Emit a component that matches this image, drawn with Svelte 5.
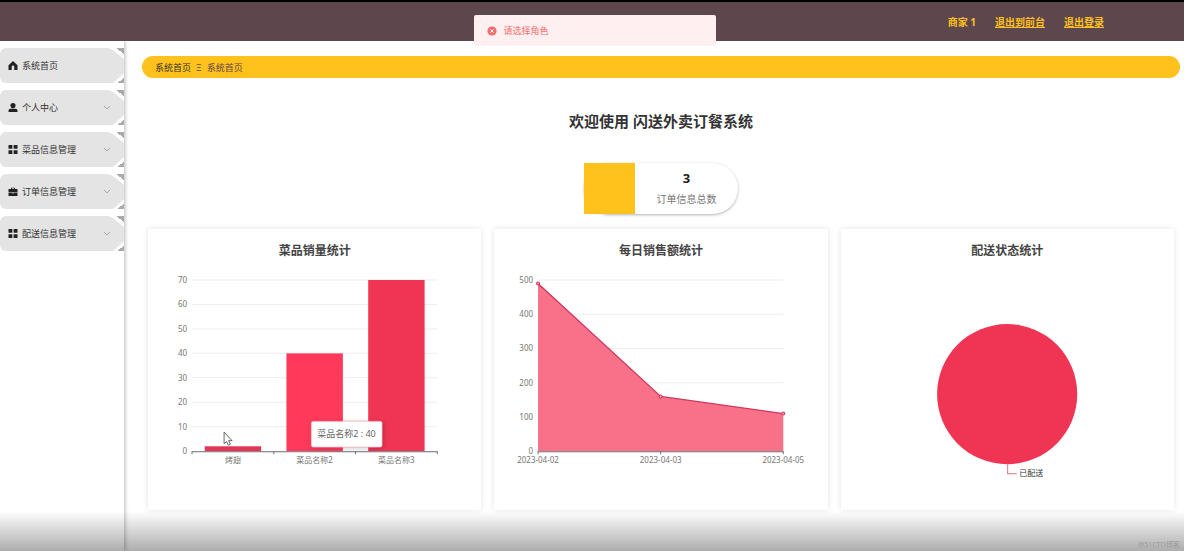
<script lang="ts">
	interface MenuItem {
		label: string;
		icon: 'home' | 'user' | 'grid' | 'case';
		children?: boolean;
	}

	const menu: MenuItem[] = [
		{ label: '系统首页', icon: 'home' },
		{ label: '个人中心', icon: 'user', children: true },
		{ label: '菜品信息管理', icon: 'grid', children: true },
		{ label: '订单信息管理', icon: 'case', children: true },
		{ label: '配送信息管理', icon: 'grid', children: true }
	];

	const icons = {
		home: 'M8 1 1 7.5V15h5v-5a2 2 0 0 1 4 0v5h5V7.5z',
		user: 'M8 1a4 4 0 1 1 0 8 4 4 0 0 1 0-8zM1 15v-2a3 3 0 0 1 3-3h8a3 3 0 0 1 3 3v2z',
		grid: 'M1 1h6v6H1zM9 1h6v6H9zM1 9h6v6H1zM9 9h6v6H9z',
		case: 'M5 4V2h6v2h4v5H1V4zm1.500 0h3V3h-3zM1 10h6v1h2v-1h6v5H1z'
	};

	const dishes = [
		{ name: '烤翅', value: 2, color: '#e43556' },
		{ name: '菜品名称2', value: 40, color: '#ff395a' },
		{ name: '菜品名称3', value: 70, color: '#ef3553' }
	];

	const sales = [
		{ date: '2023-04-02', value: 490 },
		{ date: '2023-04-03', value: 160 },
		{ date: '2023-04-05', value: 110 }
	];

	// plot area shared by both axis charts
	const left = 44;
	const right = 289;
	const top = 21;
	const base = 192;

	const dishTicks = [0, 10, 20, 30, 40, 50, 60, 70];
	const salesTicks = [0, 100, 200, 300, 400, 500];
	const band = (right - left) / dishes.length;
	const barWidth = band * 0.69;

	function scale(value: number, max: number) {
		return base - (value / max) * (base - top);
	}

	const points = sales.map((s, i) => ({
		...s,
		x: left + (i * (right - left)) / (sales.length - 1),
		y: scale(s.value, 500)
	}));
	const line = points.map((p) => `${p.x},${p.y}`).join(' ');
</script>

<div class="app">
	<header class="topbar">
		<span>商家 1</span>
		<a href="#front">退出到前台</a>
		<a href="#logout">退出登录</a>
	</header>

	<div class="body">
		<nav class="sidebar">
			<ul>
				{#each menu as item}
					<li>
						<button class="menu-btn">
							<svg class="menu-icon" viewBox="1 1 14 14" aria-hidden="true">
								<path d={icons[item.icon]} fill-rule="evenodd" />
							</svg>
							<span>{item.label}</span>
							{#if item.children}
								<svg class="arrow" viewBox="0 0 8 8" aria-hidden="true">
									<path d="M1 2l3 3 3-3" />
								</svg>
							{/if}
						</button>
					</li>
				{/each}
			</ul>
		</nav>

		<main>
			<div class="breadcrumb">
				<a href="#home">系统首页</a>
				<span class="sep">Ξ</span>
				<span>系统首页</span>
			</div>

			<h1>欢迎使用 闪送外卖订餐系统</h1>

			<div class="stat">
				<div class="stat-icon"></div>
				<div class="stat-text">
					<strong>3</strong>
					<span>订单信息总数</span>
				</div>
			</div>

			<div class="cards">
				<section class="card">
					<h2>菜品销量统计</h2>
					<svg class="chart" viewBox="0 0 333 251">
						{#each dishTicks as tick}
							<line class="grid" x1={left} x2={right} y1={scale(tick, 70)} y2={scale(tick, 70)} />
							<text class="y-label" x={left - 5} y={scale(tick, 70) + 3}>{tick}</text>
						{/each}
						{#each dishes as dish, i}
							<rect
								x={left + band * i + (band - barWidth) / 2}
								y={scale(dish.value, 70)}
								width={barWidth}
								height={base - scale(dish.value, 70)}
								fill={dish.color}
							/>
							<text class="x-label" x={left + band * (i + 0.5)} y={base + 12}>{dish.name}</text>
						{/each}
						<line class="axis" x1={left} x2={right} y1={base + 0.5} y2={base + 0.5} />
						{#each [0, 1, 2, 3] as i}
							<line class="axis" x1={left + band * i} x2={left + band * i} y1={base} y2={base + 3} />
						{/each}
						<g class="tooltip">
							<rect x="163" y="162" width="71" height="26" rx="2" />
							<text x="169" y="178">菜品名称2 : 40</text>
						</g>
						<path class="pointer" d="M76 173v11.500l2.500-2 1.800 3.500 2-1-1.800-3.500h3.500z" />
					</svg>
				</section>

				<section class="card">
					<h2>每日销售额统计</h2>
					<svg class="chart" viewBox="0 0 333 251">
						{#each salesTicks as tick}
							<line class="grid" x1={left} x2={right} y1={scale(tick, 500)} y2={scale(tick, 500)} />
							<text class="y-label" x={left - 5} y={scale(tick, 500) + 3}>{tick}</text>
						{/each}
						<polygon class="area" points="{left},{base} {line} {right},{base}" />
						<line class="axis" x1={left} x2={right} y1={base + 0.5} y2={base + 0.5} />
						<polyline class="trend" points={line} />
						{#each points as p}
							<line class="axis" x1={p.x} x2={p.x} y1={base} y2={base + 3} />
							<circle class="dot" cx={p.x} cy={p.y} r="1.500" />
							<text class="x-label" x={p.x} y={base + 12}>{p.date}</text>
						{/each}
					</svg>
				</section>

				<section class="card">
					<h2>配送状态统计</h2>
					<svg class="chart" viewBox="0 0 333 251">
						<circle cx="166" cy="135" r="70" fill="#ef3553" />
						<path class="leader" d="M166.500 205v9.500h9" />
						<text class="pie-label" x="178" y="217">已配送</text>
					</svg>
				</section>
			</div>
		</main>
	</div>

	<div class="message" role="alert">
		<svg viewBox="0 0 10 10" aria-hidden="true">
			<circle cx="5" cy="5" r="4.600" />
			<path d="M3.300 3.300l3.400 3.400M6.700 3.300L3.300 6.700" />
		</svg>
		<span>请选择角色</span>
	</div>

	<div class="fade"><span>@51CTO博客</span></div>
</div>

<style>
	:global(body) {
		background: #fff;
		font-family: 'Noto Sans', 'Noto Sans CJK SC', sans-serif;
		color: #333;
	}

	.app {
		display: flex;
		flex-direction: column;
		min-height: 100vh;
	}

	.topbar {
		display: flex;
		align-items: center;
		justify-content: flex-end;
		gap: 19px;
		box-sizing: border-box;
		height: 41px;
		padding-right: 80px;
		border-top: 2px solid #000;
		background: #5d474c;
		color: #ffc11c;
		font-size: 10px;
		font-weight: 700;
	}

	.topbar a {
		color: inherit;
	}

	.body {
		display: flex;
		flex: 1;
	}

	.sidebar {
		flex: 0 0 124px;
		box-shadow: 1px 0 4px rgba(0, 0, 0, 0.28);
		clip-path: inset(0 -8px 0 0);
	}

	.sidebar ul {
		display: flex;
		flex-direction: column;
		gap: 7px;
		margin: 0;
		padding: 7px 0;
		list-style: none;
	}

	/* grey folded corners behind the cut button */
	.sidebar li {
		background:
			linear-gradient(to top right, transparent 50%, #aaa 50%) top right / 8px 6px no-repeat,
			linear-gradient(to bottom right, transparent 50%, #aaa 50%) bottom right / 7px 5px no-repeat;
	}

	.menu-btn {
		display: flex;
		align-items: center;
		gap: 4px;
		width: 100%;
		height: 35px;
		padding: 0 13px 0 8px;
		border: 0;
		border-radius: 6px 0 0 6px;
		background: #e4e4e4;
		clip-path: polygon(0 0, 108px 0, 113px 2px, 100% 11px, 100% 25px, 113px 100%, 0 100%);
		color: #333;
		font: inherit;
		font-size: 9px;
		cursor: pointer;
	}

	.menu-icon {
		width: 10px;
		height: 9px;
		fill: #222;
	}

	.arrow {
		width: 8px;
		height: 8px;
		margin-left: auto;
		fill: none;
		stroke: #999;
		stroke-width: 0.8;
	}

	main {
		display: flex;
		flex: 1;
		flex-direction: column;
		align-items: center;
		min-width: 0;
		padding: 15px 4px 40px 18px;
	}

	.breadcrumb {
		display: flex;
		align-items: center;
		align-self: stretch;
		gap: 5px;
		height: 22px;
		padding: 0 13px;
		border-radius: 11px;
		background: #ffc11c;
		color: #5d474c;
		font-size: 9px;
	}

	.breadcrumb a {
		color: #333;
		text-decoration: none;
	}

	h1 {
		margin: 33px 0 32px;
		font-size: 15px;
		line-height: 20px;
	}

	.stat {
		display: flex;
		height: 51px;
		margin-bottom: 15px;
		border-radius: 26px;
		box-shadow: 0 1px 3px rgba(0, 0, 0, 0.3);
	}

	.stat-icon {
		width: 51px;
		background: #ffc11c;
	}

	.stat-text {
		display: flex;
		flex-direction: column;
		align-items: center;
		gap: 5px;
		width: 103px;
		padding-top: 7px;
		color: #777;
		font-size: 10px;
		line-height: 16px;
	}

	.stat-text strong {
		color: #222;
		font-size: 13px;
	}

	.cards {
		display: grid;
		grid-template-columns: repeat(3, 1fr);
		align-self: stretch;
		gap: 13px;
		margin: 0 6px;
	}

	.card {
		padding-top: 14px;
		background: #fff;
		box-shadow: 0 0 6px rgba(0, 0, 0, 0.11);
	}

	h2 {
		margin: 0;
		color: #444;
		font-size: 12px;
		line-height: 16px;
		text-align: center;
	}

	.chart {
		display: block;
		width: 100%;
		font-size: 8px;
		fill: #777;
	}

	.grid {
		stroke: #ebedf0;
	}

	.axis {
		stroke: #6e7079;
	}

	.y-label {
		text-anchor: end;
	}

	.x-label {
		text-anchor: middle;
	}

	.area {
		fill: #f97189;
	}

	.trend {
		fill: none;
		stroke: #cf3860;
		stroke-width: 1.3;
	}

	.dot {
		fill: #f5a3b4;
		stroke: #cf3860;
	}

	.tooltip rect {
		fill: #fff;
		stroke: #ef8095;
		stroke-width: 0.5;
		filter: drop-shadow(1px 1px 2px rgba(0, 0, 0, 0.2));
	}

	.tooltip text {
		font-size: 9px;
		fill: #666;
	}

	.pointer {
		fill: #fff;
		stroke: #444;
		stroke-width: 0.8;
	}

	.leader {
		fill: none;
		stroke: #e0708a;
	}

	.pie-label {
		fill: #333;
	}

	.message {
		position: fixed;
		top: 15px;
		left: 40%;
		display: flex;
		align-items: center;
		gap: 7px;
		box-sizing: border-box;
		min-width: 242px;
		height: 31px;
		padding: 0 13px;
		border-radius: 2px;
		background: #fef0f0;
		color: #f56c6c;
		font-size: 9px;
	}

	.message svg {
		width: 10px;
		height: 10px;
		fill: #f56c6c;
	}

	.message path {
		stroke: #fff;
	}

	.fade {
		position: fixed;
		right: 0;
		bottom: 0;
		left: 0;
		display: flex;
		align-items: flex-end;
		justify-content: flex-end;
		box-sizing: border-box;
		height: 40px;
		padding: 2px 4px;
		background: linear-gradient(transparent, rgba(0, 0, 0, 0.32));
		color: #999;
		font-size: 7px;
		pointer-events: none;
	}
</style>
